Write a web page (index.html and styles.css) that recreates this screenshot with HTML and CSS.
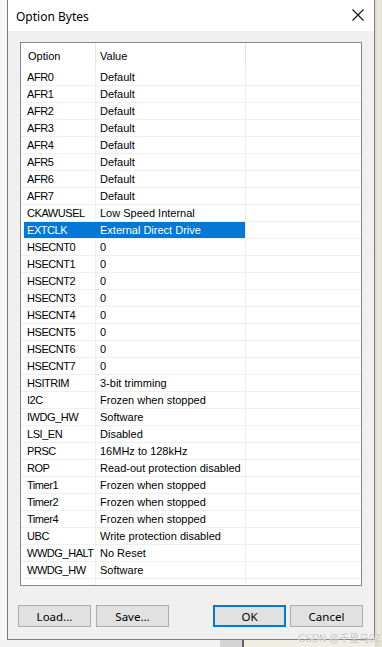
FILE: index.html
```html
<!DOCTYPE html>
<html>
<head>
<meta charset="utf-8">
<link rel="stylesheet" href="styles.css">
</head>
<body>
<div class="window">
  <div class="titlebar">
    <span class="title">Option Bytes</span>
    <svg class="close" width="12" height="12" viewBox="0 0 12 12"><path d="M0.5 0.5 L11.5 11.5 M11.5 0.5 L0.5 11.5" stroke="#111" stroke-width="1.1" fill="none"/></svg>
  </div>
  <div class="content">
    <div class="list">
      <div class="row head"><div class="c1">Option</div><div class="c2">Value</div><div class="c3"></div></div>
      <div class="row"><div class="c1">AFR0</div><div class="c2">Default</div><div class="c3"></div></div>
      <div class="row"><div class="c1">AFR1</div><div class="c2">Default</div><div class="c3"></div></div>
      <div class="row"><div class="c1">AFR2</div><div class="c2">Default</div><div class="c3"></div></div>
      <div class="row"><div class="c1">AFR3</div><div class="c2">Default</div><div class="c3"></div></div>
      <div class="row"><div class="c1">AFR4</div><div class="c2">Default</div><div class="c3"></div></div>
      <div class="row"><div class="c1">AFR5</div><div class="c2">Default</div><div class="c3"></div></div>
      <div class="row"><div class="c1">AFR6</div><div class="c2">Default</div><div class="c3"></div></div>
      <div class="row"><div class="c1">AFR7</div><div class="c2">Default</div><div class="c3"></div></div>
      <div class="row"><div class="c1">CKAWUSEL</div><div class="c2">Low Speed Internal</div><div class="c3"></div></div>
      <div class="row sel"><div class="c1">EXTCLK</div><div class="c2">External Direct Drive</div><div class="c3"></div></div>
      <div class="row"><div class="c1">HSECNT0</div><div class="c2">0</div><div class="c3"></div></div>
      <div class="row"><div class="c1">HSECNT1</div><div class="c2">0</div><div class="c3"></div></div>
      <div class="row"><div class="c1">HSECNT2</div><div class="c2">0</div><div class="c3"></div></div>
      <div class="row"><div class="c1">HSECNT3</div><div class="c2">0</div><div class="c3"></div></div>
      <div class="row"><div class="c1">HSECNT4</div><div class="c2">0</div><div class="c3"></div></div>
      <div class="row"><div class="c1">HSECNT5</div><div class="c2">0</div><div class="c3"></div></div>
      <div class="row"><div class="c1">HSECNT6</div><div class="c2">0</div><div class="c3"></div></div>
      <div class="row"><div class="c1">HSECNT7</div><div class="c2">0</div><div class="c3"></div></div>
      <div class="row"><div class="c1">HSITRIM</div><div class="c2">3-bit trimming</div><div class="c3"></div></div>
      <div class="row"><div class="c1">I2C</div><div class="c2">Frozen when stopped</div><div class="c3"></div></div>
      <div class="row"><div class="c1">IWDG_HW</div><div class="c2">Software</div><div class="c3"></div></div>
      <div class="row"><div class="c1">LSI_EN</div><div class="c2">Disabled</div><div class="c3"></div></div>
      <div class="row"><div class="c1">PRSC</div><div class="c2">16MHz to 128kHz</div><div class="c3"></div></div>
      <div class="row"><div class="c1">ROP</div><div class="c2">Read-out protection disabled</div><div class="c3"></div></div>
      <div class="row"><div class="c1">Timer1</div><div class="c2">Frozen when stopped</div><div class="c3"></div></div>
      <div class="row"><div class="c1">Timer2</div><div class="c2">Frozen when stopped</div><div class="c3"></div></div>
      <div class="row"><div class="c1">Timer4</div><div class="c2">Frozen when stopped</div><div class="c3"></div></div>
      <div class="row"><div class="c1">UBC</div><div class="c2">Write protection disabled</div><div class="c3"></div></div>
      <div class="row"><div class="c1">WWDG_HALT</div><div class="c2">No Reset</div><div class="c3"></div></div>
      <div class="row"><div class="c1">WWDG_HW</div><div class="c2">Software</div><div class="c3"></div></div>
      <div class="row filler"><div class="c1"></div><div class="c2"></div><div class="c3"></div></div>
    </div>
    <div class="buttons">
      <div class="group">
        <button class="btn">Load...</button>
        <button class="btn">Save...</button>
      </div>
      <div class="group right">
        <button class="btn default">OK</button>
        <button class="btn">Cancel</button>
      </div>
    </div>
  </div>
</div>
<div class="desk"></div>
<div class="watermark">CSDN @千里马02</div>
</body>
</html>
```
FILE: styles.css
```css
html, body {
  margin: 0;
  padding: 0;
}
body {
  width: 382px;
  height: 647px;
  overflow: hidden;
  position: relative;
  background: linear-gradient(to right, #f6f6f6 0, #f6f6f6 375px, #d8d8cc 375px, #e9e8da 378px, #e4e3d3 382px);
  font-family: "Liberation Sans", Arial, sans-serif;
}
.window {
  box-sizing: border-box;
  margin-left: 7px;
  width: 368px;
  height: 640px;
  border: 1px solid #7d7d7d;
  border-top: none;
  display: flex;
  flex-direction: column;
  background: #f0f0f0;
}
.titlebar {
  height: 31px;
  background: #ffffff;
  display: flex;
  align-items: center;
  justify-content: space-between;
  padding: 0 10px 0 8px;
  flex: none;
}
.title {
  font-family: "Noto Sans", "Liberation Sans", sans-serif;
  font-size: 12px;
  color: #000;
  margin-top: 1px;
}
.close {
  display: block;
  margin-bottom: 1px;
}
.content {
  flex: 1;
  display: flex;
  flex-direction: column;
  padding: 11px 12px 12px 12px;
}
.list {
  box-sizing: border-box;
  height: 544px;
  border: 1px solid #828790;
  background: #fff;
  display: flex;
  flex-direction: column;
  font-size: 11px;
  color: #000;
}
.row {
  display: flex;
  height: 17px;
  box-sizing: border-box;
  border-bottom: 1px solid #f0f0f0;
  flex: none;
}
.row > div {
  box-sizing: border-box;
  display: flex;
  align-items: center;
  white-space: nowrap;
  overflow: hidden;
  border-right: 1px solid #f0f0f0;
}
.c1 {
  width: 75px;
  padding-left: 6px;
  letter-spacing: -0.45px;
}
.c2 {
  width: 150px;
  padding-left: 4px;
}
.c3 {
  flex: 1;
  border-right: none !important;
}
.row.head {
  height: 26px;
  border-bottom: none;
}
.row.head > div {
  border-right-color: #e5e5e5;
  padding-bottom: 1px;
}
.row.head .c1 {
  padding-left: 7px;
  letter-spacing: 0;
}
.row.sel .c1 {
  background: linear-gradient(to right, transparent 3px, #0078d7 3px);
  color: #fff;
  border-right-color: #0078d7;
}
.row.sel .c2 {
  background: #0078d7;
  color: #fff;
}
.row.filler {
  flex: 1;
  border-bottom: none;
}
.buttons {
  margin-top: 19px;
  margin-left: -2px;
  margin-right: -1px;
  display: flex;
  justify-content: space-between;
}
.group {
  display: flex;
  gap: 5px;
}
.group.right {
  gap: 4px;
}
.btn {
  box-sizing: border-box;
  width: 73px;
  height: 22px;
  margin: 0;
  padding: 0;
  background: #e1e1e1;
  border: 1px solid #adadad;
  font-family: "Noto Sans", "Liberation Sans", sans-serif;
  font-size: 11.5px;
  color: #000;
}
.btn.default {
  border: 1px solid #0078d7;
  box-shadow: inset 0 0 0 1px #0078d7;
}
.desk {
  height: 7px;
  background: linear-gradient(to right, #f2f2f2 0, #f2f2f2 220px, #d4d4d4 220px, #d4d4d4 242px, #606060 242px, #606060 244px, #efeee4 244px, #efeee4 375px, #d8d8cc 375px, #e4e3d3 382px);
}
.watermark {
  position: absolute;
  left: 298px;
  top: 630px;
  font-family: "Liberation Sans", "Noto Sans CJK SC", sans-serif;
  font-size: 10px;
  color: #c4c4c4;
  text-shadow: 0 0 1px #fff;
  white-space: nowrap;
}
```
